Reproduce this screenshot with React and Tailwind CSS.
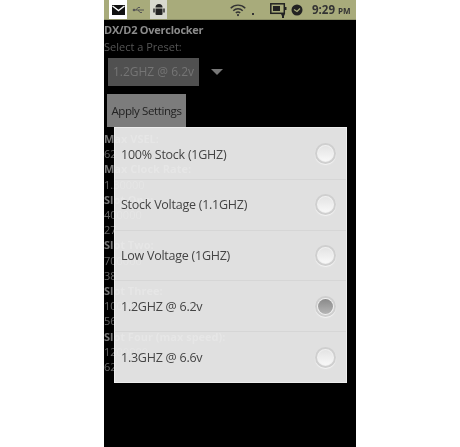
import React from 'react'

const presets = [
  { label: '100% Stock (1GHZ)' },
  { label: 'Stock Voltage (1.1GHZ)' },
  { label: 'Low Voltage (1GHZ)' },
  { label: '1.2GHZ @ 6.2v', checked: true },
  { label: '1.3GHZ @ 6.6v' },
]

const behind = [
  ['Max VSEL:', true],
  ['62', false],
  ['Max Clock Rate:', true],
  ['1.30000', false],
  ['Slot One:', true],
  ['400000', false],
  ['27', false],
  ['Slot Two:', true],
  ['700000', false],
  ['38', false],
  ['Slot Three:', true],
  ['1000000', false],
  ['56', false],
  ['Slot Four (max speed):', true],
  ['1200000', false],
  ['62', false],
]

function StatusBar() {
  return (
    <div className="h-[20px] bg-[#a8ab7b] border-b border-[#8d9068] flex items-center shrink-0 relative">
      <div className="ml-[5px] w-[18px] h-[19px] bg-white flex items-center justify-center">
        <svg width="13" height="10" viewBox="0 0 13 10"><path d="M0 0h13v10H0z" fill="#111" /><path d="M0.500 1l6 4.500 6-4.500" fill="none" stroke="#fff" strokeWidth="1.400" /></svg>
      </div>
      <svg className="ml-[5px]" width="14" height="8" viewBox="0 0 14 8"><path d="M1 4h11M4 4l2-2.500h2M6 4l2 2.500h2" fill="none" stroke="#555" strokeWidth="1" /><circle cx="2" cy="4" r="1.300" fill="#555" /></svg>
      <div className="ml-[4px] w-[17px] h-[19px] bg-[#d8d9cf] flex items-center justify-center">
        <svg width="12" height="14" viewBox="0 0 12 14"><path d="M2.500 4.500a3.500 3.500 0 0 1 7 0z" fill="#222" /><path d="M2.500 5.500h7v5.500a1 1 0 0 1-1 1h-5a1 1 0 0 1-1-1z" fill="#222" /><path d="M1 5.500v4M11 5.500v4" stroke="#222" strokeWidth="1.400" /></svg>
      </div>
      <svg className="ml-[63px]" width="16" height="14" viewBox="0 0 22 17"><path d="M1 6a14 14 0 0 1 20 0M4.500 9.500a9 9 0 0 1 13 0M8 12.500a4.500 4.500 0 0 1 6 0" fill="none" stroke="#333" strokeWidth="2" /><circle cx="11" cy="15.500" r="1.500" fill="#333" /></svg>
      <div className="ml-[6px] mt-[8px] w-[2px] h-[2px] bg-[#333]" />
      <svg className="ml-[16px]" width="18" height="16" viewBox="0 0 18 16"><rect x="0.800" y="1.800" width="13.500" height="9.500" fill="none" stroke="#222" strokeWidth="1.500" /><rect x="3" y="4" width="7" height="5" fill="#222" /><path d="M15 5h1.500v3H15z" fill="#222" /><path d="M11 12h4l-1 2v2h-2v-2z" fill="#222" /></svg>
      <svg className="ml-[3px]" width="12" height="12" viewBox="0 0 12 12"><circle cx="6" cy="6" r="5.500" fill="#222" /><path d="M3 5.500l3 2 3-3" fill="none" stroke="#a8ab7b" strokeWidth="1.300" /></svg>
      <span className="ml-[9px] text-[11.500px] font-bold text-[#333] leading-none">9:29</span>
      <span className="ml-[3px] text-[8px] font-bold text-[#333] leading-none mt-[2px]">PM</span>
    </div>
  )
}

function Radio({ checked }) {
  return (
    <div className="w-[21px] h-[21px] rounded-full bg-[#f0f0f0] border-[2px] border-[#cfcfcf] flex items-center justify-center shadow-[0_1px_1px_#f4f4f4]">
      {checked
        ? <div className="w-[15px] h-[15px] rounded-full bg-gradient-to-b from-[#8a8a8a] to-[#b5b5b5]" />
        : <div className="w-[15px] h-[15px] rounded-full bg-gradient-to-b from-[#e4e4e4] to-[#f8f8f8]" />}
    </div>
  )
}

function PresetDialog() {
  return (
    <div className="absolute left-[10px] top-[127px] w-[233px] h-[256px] pt-[1px] bg-[#ececec]/95 flex flex-col border border-[#f4f4f4]/70">
      {presets.map((p, i) => (
        <div key={p.label} className={`flex-1 flex items-center justify-between pl-[6px] pr-[10px] ${i ? 'border-t border-[#d6d6d6]' : ''}`}>
          <span className="text-[12.500px] tracking-[-0.25px] text-[#444] mt-[2px]">{p.label}</span>
          <Radio checked={p.checked} />
        </div>
      ))}
    </div>
  )
}

export default function App() {
  return (
    <div className="w-[460px] h-[447px] bg-white overflow-hidden font-['Open_Sans',sans-serif] blur-[0.4px]">
      <div className="ml-[104px] w-[252px] h-full bg-black relative flex flex-col">
        <StatusBar />
        <div className="text-[11px] tracking-[-0.25px] font-bold text-[#8b8b8b] leading-[14px] mt-[3px]">DX/D2 Overclocker</div>
        <div className="text-[11px] text-[#555] leading-[14px] mt-[3px]">Select a Preset:</div>
        <div className="flex items-center mt-[4px] ml-[4px]">
          <div className="w-[91px] h-[28px] bg-[#505050] flex items-center justify-center text-[12px] text-[#757575]">1.2GHZ @ 6.2v</div>
          <div className="ml-[12px] w-0 h-0 border-x-[6px] border-x-transparent border-t-[6px] border-t-[#777]" />
        </div>
        <div className="mt-[8px] ml-[3px] w-[79px] h-[33px] bg-[#7c7c7c] flex items-center justify-center text-[11.500px] tracking-[-0.4px] text-[#222]">Apply Settings</div>
        <div className="mt-[4px]">
          {behind.map(([text, strong], i) => (
            <div key={i} className={`text-[11px] leading-[15.200px] ${strong ? 'font-bold text-[#777]' : 'text-[#666]'}`}>{text}</div>
          ))}
        </div>
        <PresetDialog />
      </div>
    </div>
  )
}
